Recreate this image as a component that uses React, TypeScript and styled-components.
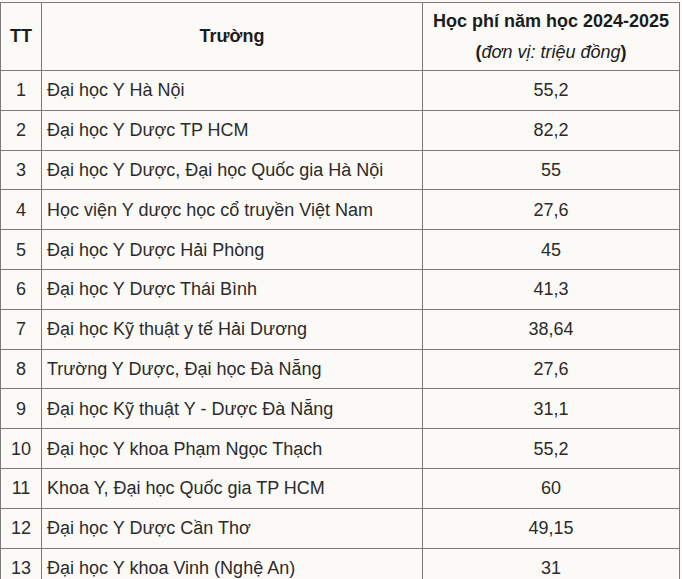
import styled, { createGlobalStyle } from 'styled-components'

const GlobalStyle = createGlobalStyle`
  body {
    margin: 0;
    background: #fbfaf7;
    font-family: "Liberation Sans", Arial, sans-serif;
  }
`

const rows: [string, string][] = [
  ['Đại học Y Hà Nội', '55,2'],
  ['Đại học Y Dược TP HCM', '82,2'],
  ['Đại học Y Dược, Đại học Quốc gia Hà Nội', '55'],
  ['Học viện Y dược học cổ truyền Việt Nam', '27,6'],
  ['Đại học Y Dược Hải Phòng', '45'],
  ['Đại học Y Dược Thái Bình', '41,3'],
  ['Đại học Kỹ thuật y tế Hải Dương', '38,64'],
  ['Trường Y Dược, Đại học Đà Nẵng', '27,6'],
  ['Đại học Kỹ thuật Y - Dược Đà Nẵng', '31,1'],
  ['Đại học Y khoa Phạm Ngọc Thạch', '55,2'],
  ['Khoa Y, Đại học Quốc gia TP HCM', '60'],
  ['Đại học Y Dược Cần Thơ', '49,15'],
  ['Đại học Y khoa Vinh (Nghệ An)', '31'],
]

function App() {
  return (
    <Page>
      <GlobalStyle />
      <Table>
        <colgroup>
          <col style={{ width: 41 }} />
          <col style={{ width: 381 }} />
          <col style={{ width: 257 }} />
        </colgroup>
        <thead>
          <tr>
            <HeadCell>TT</HeadCell>
            <HeadCell>Trường</HeadCell>
            <HeadCell>
              <HeadLine>Học phí năm học 2024-2025</HeadLine>
              <HeadLine>
                (<em>đơn vị: triệu đồng</em>)
              </HeadLine>
            </HeadCell>
          </tr>
        </thead>
        <tbody>
          {rows.map(([name, fee], i) => (
            <tr key={i}>
              <Cell $align='center'>{i + 1}</Cell>
              <Cell $align='left'>{name}</Cell>
              <Cell $align='center'>{fee}</Cell>
            </tr>
          ))}
        </tbody>
      </Table>
    </Page>
  )
}

const Page = styled.div`
  padding-top: 2px;
  overflow: hidden;
  height: 577px;
`

const Table = styled.table`
  border-collapse: collapse;
  table-layout: fixed;
  width: 679px;
  color: #2b2b2b;
  font-size: 18px;
`

const HeadCell = styled.th`
  border: 1px solid #7a7a7a;
  height: 67px;
  padding: 0 4px;
  text-align: center;
  vertical-align: middle;
  font-weight: bold;
  color: #1c1c1c;
  line-height: 31px;
`

const HeadLine = styled.div`
  white-space: nowrap;

  em {
    font-weight: normal;
    font-style: italic;
  }
`

const Cell = styled.td<{ $align: 'left' | 'center' }>`
  border: 1px solid #7a7a7a;
  height: 38.8px;
  padding: 0 5px;
  text-align: ${p => p.$align};
  vertical-align: middle;
  line-height: 22px;
  white-space: nowrap;
`

export default App
